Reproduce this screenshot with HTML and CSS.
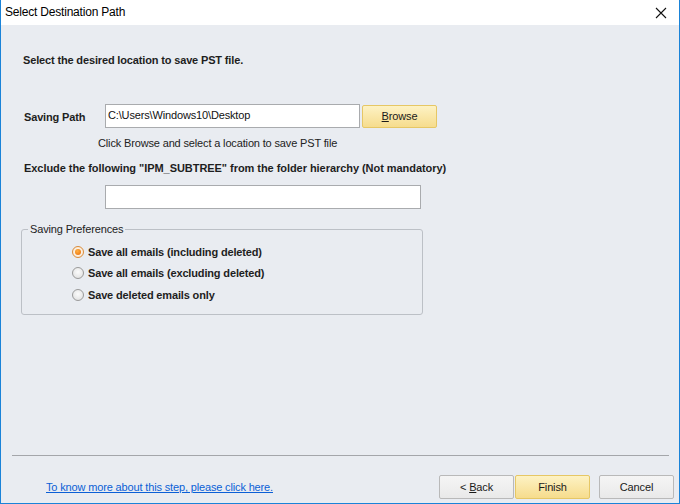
FILE: index.html
```html
<!DOCTYPE html>
<html>
<head>
<meta charset="utf-8">
<title>Select Destination Path</title>
<link rel="stylesheet" href="styles.css">
</head>
<body>
<div class="window">
  <div class="titlebar">
    <span class="title">Select Destination Path</span>
    <svg class="close" width="12" height="12" viewBox="0 0 12 12"><path d="M1 1 L11 11 M11 1 L1 11" stroke="#111" stroke-width="1.1" fill="none"/></svg>
  </div>
  <div class="content">
    <div class="heading">Select the desired location to save PST file.</div>
    <div class="path-row">
      <span class="label">Saving Path</span>
      <div class="input path-input">C:\Users\Windows10\Desktop</div>
      <button class="btn btn-yellow browse"><u>B</u>rowse</button>
    </div>
    <div class="hint">Click Browse and select a location to save PST file</div>
    <div class="label exclude">Exclude the following "IPM_SUBTREE" from the folder hierarchy (Not mandatory)</div>
    <div class="input exclude-input"></div>
    <div class="group">
      <span class="group-title">Saving Preferences</span>
      <div class="radio-row"><span class="radio checked"></span><span class="label">Save all emails (including deleted)</span></div>
      <div class="radio-row"><span class="radio"></span><span class="label">Save all emails (excluding deleted)</span></div>
      <div class="radio-row"><span class="radio"></span><span class="label">Save deleted emails only</span></div>
    </div>
  </div>
  <div class="separator"></div>
  <div class="footer">
    <a class="link" href="#">To know more about this step, please click here.</a>
    <div class="buttons">
      <button class="btn back">&lt; <u>B</u>ack</button>
      <button class="btn btn-yellow finish">Finish</button>
      <button class="btn cancel">Cancel</button>
    </div>
  </div>
</div>
</body>
</html>
```

FILE: styles.css
```css
* { box-sizing: border-box; }
html, body { margin: 0; padding: 0; }
body {
  width: 680px;
  height: 504px;
  font-family: "Liberation Sans", Arial, sans-serif;
  font-size: 11px;
  letter-spacing: -0.15px;
  color: #1e1e1e;
}
.window {
  width: 680px;
  height: 504px;
  background: #e9ecf1;
  border: 1px solid #1a83d8;
  border-top: none;
  display: flex;
  flex-direction: column;
}
.titlebar {
  height: 25px;
  background: #fff;
  display: flex;
  align-items: center;
  justify-content: space-between;
  padding: 0 12px 0 4px;
  flex: none;
}
.title {
  font-size: 12px;
  letter-spacing: -0.2px;
  color: #000;
  margin-top: -1px;
}
.close { display: block; margin-top: 1px; }
.content {
  flex: 1;
  padding: 28px 0 0 22px;
  display: flex;
  flex-direction: column;
  align-items: flex-start;
}
.heading {
  font-weight: bold;
  line-height: 14px;
  height: 14px;
}
.label { font-weight: bold; line-height: 14px; }
.path-row {
  margin-top: 37px;
  display: flex;
  align-items: center;
  height: 24px;
}
.path-row .label { width: 82px; padding-left: 1px; margin-top: 2px; }
.input {
  background: #fff;
  border: 1px solid #a9abae;
  height: 24px;
  color: #111;
  line-height: 20px;
  padding: 0 2px;
}
.path-input { width: 255px; }
.btn {
  font-family: "Liberation Sans", Arial, sans-serif;
  font-size: 11px;
  letter-spacing: -0.15px;
  height: 24px;
  width: 75px;
  border: 1px solid #b9b9b9;
  border-radius: 2px;
  background: linear-gradient(#f5f5f5, #e9e9e9);
  color: #1a1a1a;
  padding: 0;
  margin: 0;
}
.btn u { text-decoration: underline; }
.btn-yellow {
  border-color: #e6c765;
  background: linear-gradient(#fdf2c4, #f6dc8d);
}
.browse { margin-left: 2px; width: 75px; height: 23px; }
.hint {
  margin-top: 8px;
  margin-left: 75px;
  line-height: 14px;
  color: #222;
}
.exclude { margin-top: 11px; margin-left: 1px; letter-spacing: -0.05px; }
.exclude-input { margin-top: 10px; margin-left: 82px; width: 316px; }
.group {
  position: relative;
  margin-top: 20px;
  margin-left: -2px;
  width: 402px;
  height: 86px;
  border: 1px solid #bcc0c6;
  border-radius: 3px;
  padding: 11px 0 0 50px;
}
.group-title {
  position: absolute;
  top: -8px;
  left: 6px;
  padding: 0 2px 0 2px;
  background: #e9ecf1;
  line-height: 14px;
  color: #222;
}
.radio-row {
  display: flex;
  align-items: center;
  height: 21.5px;
}
.radio-row .label { margin-left: 4px; }
.radio {
  width: 12px;
  height: 12px;
  border-radius: 50%;
  border: 1px solid #9a9a9a;
  background: radial-gradient(circle at 50% 40%, #fbfbfb 0%, #e6e6e6 70%, #d8d8d8 100%);
  display: inline-block;
  position: relative;
}
.radio.checked {
  border-color: #d98b3a;
  background: radial-gradient(circle, #ffffff 0%, #f6e2c8 100%);
}
.radio.checked::after {
  content: "";
  position: absolute;
  left: 2px;
  top: 2px;
  width: 6px;
  height: 6px;
  border-radius: 50%;
  background: radial-gradient(circle at 40% 35%, #ffb040, #e86a0a);
}
.separator {
  flex: none;
  height: 1px;
  margin: 0 10px 0 11px;
  background: #a4a6aa;
}
.footer {
  flex: none;
  height: 47px;
  display: flex;
  align-items: flex-start;
  justify-content: space-between;
  padding: 19px 5px 0 45px;
}
.link {
  color: #0b5fd6;
  text-decoration: underline;
  line-height: 14px;
  margin-top: 5px;
}
.buttons { display: flex; }
.back { width: 75px; }
.finish { margin-left: 1px; width: 75px; }
.cancel { margin-left: 9px; width: 75px; }
```
